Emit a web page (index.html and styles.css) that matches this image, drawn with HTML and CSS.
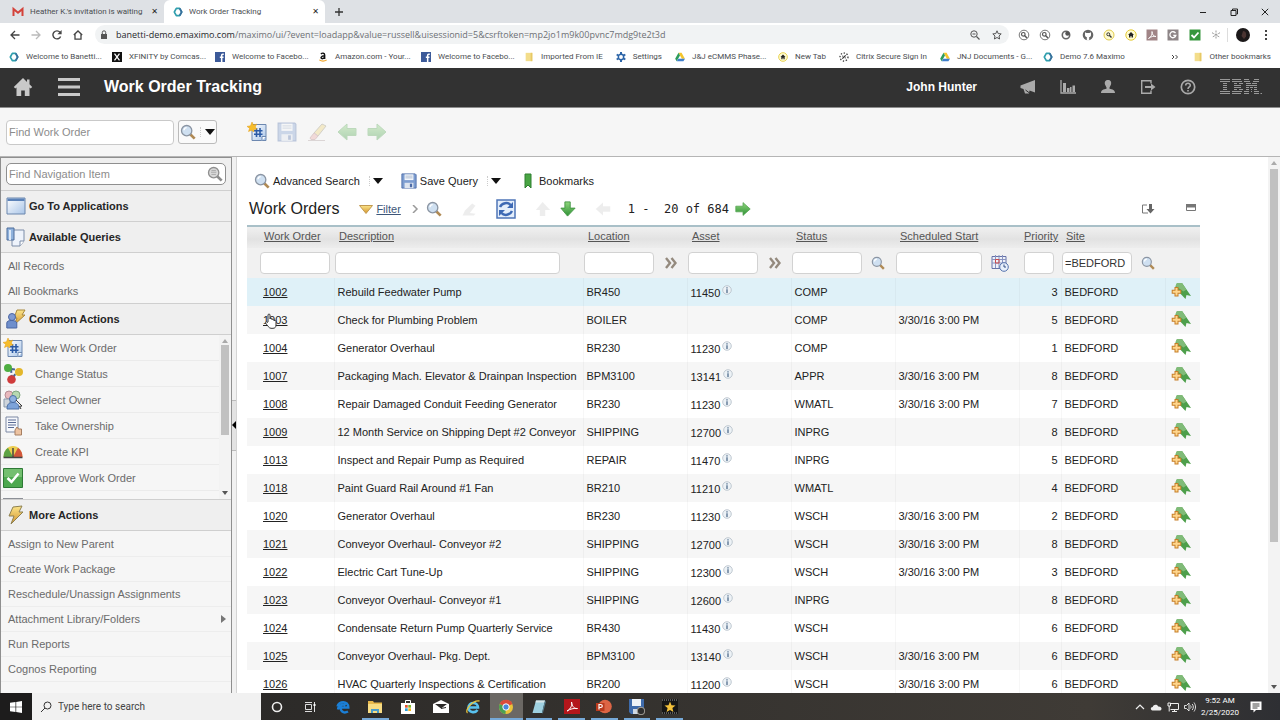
FILE: index.html
```html
<!DOCTYPE html>
<html lang="en">
<head>
<meta charset="utf-8">
<title>Work Order Tracking</title>
<link rel="stylesheet" href="styles.css">
</head>
<body>
<svg class="defs" aria-hidden="true">
  <defs>
    <linearGradient id="g-green" x1="0" y1="0" x2="0" y2="1"><stop offset="0" stop-color="#8fd67c"/><stop offset="1" stop-color="#2f9136"/></linearGradient>
    <linearGradient id="g-gold" x1="0" y1="0" x2="0" y2="1"><stop offset="0" stop-color="#fbe58a"/><stop offset="1" stop-color="#d3932c"/></linearGradient>
    <linearGradient id="g-blue" x1="0" y1="0" x2="1" y2="1"><stop offset="0" stop-color="#ffffff"/><stop offset="1" stop-color="#a9c5e8"/></linearGradient>
  </defs>
  <symbol id="i-ring" viewBox="0 0 12 12"><path d="M4 1.600h4L10.400 6 8 10.400H4L1.600 6z" fill="none" stroke="#2f9fae" stroke-width="2" stroke-linejoin="round"/><path d="M8 1.600 10.400 6 8 10.400" fill="none" stroke="#3a6f9c" stroke-width="2" stroke-linejoin="round"/></symbol>
  <symbol id="i-fb" viewBox="0 0 12 12"><path d="M0 0h12v12H0z" fill="#3c5a99"/><path d="M10.500 2.600H9.300c-1 0-1.300.5-1.300 1.400V12M5.800 6.400h4.400" fill="none" stroke="#fff" stroke-width="1.800"/></symbol>
  <symbol id="i-drive" viewBox="0 0 12 12"><path d="M4.200 1h3.700l4 7H8.200z" fill="#f5c52c"/><path d="M4.200 1 6 4.300 2 11 .2 8z" fill="#2e9c5b"/><path d="M4 8h8l-1.900 3H2z" fill="#3f7ecb"/></symbol>
  <symbol id="i-folder" viewBox="0 0 12 12"><path d="M2 1h8v10H2z" fill="#f3dd8b"/><path d="M8 1h2v10H8z" fill="#e7c965"/></symbol>
  <symbol id="i-home-badge" viewBox="0 0 12 12"><circle cx="6" cy="6" r="5.200" fill="#fffbd0" stroke="#e4ca36"/><path d="M6 3 3 6h1v2.600h1.500V7h1v1.600H8V6h1z" fill="#222"/></symbol>
  <symbol id="i-lens" viewBox="0 0 18 18"><path d="m11.500 11.500 5 5" stroke="#b08a54" stroke-width="3"/><circle cx="7.500" cy="7.500" r="5.800" fill="#cfe0f1" stroke="#8b95a3" stroke-width="1.500"/><path d="M4.500 7a3.200 3.200 0 0 1 3-3" fill="none" stroke="#fff" stroke-width="1.500"/></symbol>
  <symbol id="i-lens-grey" viewBox="0 0 18 18"><path d="m11.500 11.500 5 5" stroke="#8d8d8d" stroke-width="3"/><circle cx="7.500" cy="7.500" r="5.800" fill="#d9d9d9" stroke="#8f8f8f" stroke-width="1.500"/><path d="M4.500 7h6M5 9.500h5M5 5h5" stroke="#a5a5a5"/></symbol>
  <symbol id="i-new" viewBox="0 0 20 20"><path d="M5 2.500h14v16h-3l-1.500 0H5z" fill="url(#g-blue)" stroke="#6d88b0"/><path d="M15 18.500v-4h4" fill="#fff" stroke="#6d88b0"/><path d="M9.500 6v9M13 6v9M7 8.800h8.500M7 12.200h8.500" stroke="#2b5aa6" stroke-width="1.600"/><path d="m5 0 1.400 3 3.300-.8L8.200 5 10 7 7.100 7.400 6.500 10 4.700 8.200 1.500 9.500 2.600 6.300 0 4.400l3.500-.6z" fill="#f6bd2c" stroke="#e39d17" stroke-width=".5"/></symbol>
  <symbol id="i-save" viewBox="0 0 18 18"><path d="M1 1h15l1 1v15H1z" fill="#7d9dd0" stroke="#4d6ca8"/><path d="M4 1.500h10V8H4z" fill="#f4f7fb"/><path d="M5 3.500h8M5 5.500h8" stroke="#a9b7cc"/><path d="M4 11h10v6H4z" fill="#dde4ef"/><path d="M10 12h2.500v4H10z" fill="#4d6ca8"/></symbol>
  <symbol id="i-pencil" viewBox="0 0 20 20"><path d="M7 11 15 2l4 2-8 10z" fill="#f0d372" stroke="#8f8a72"/><path d="m3 16 4-5 4 3-3 3.500H4z" fill="#e9a6a2" stroke="#ad8080"/><path d="M1 18.500h17" stroke="#a99"/></symbol>
  <symbol id="i-right" viewBox="0 0 20 18"><path d="M1 5.500h9V1l9 8-9 8v-4.500H1z" fill="url(#g-green)" stroke="#55a553"/></symbol>
  <symbol id="i-left" viewBox="0 0 20 18"><path d="M19 5.500h-9V1L1 9l9 8v-4.500h9z" fill="url(#g-green)" stroke="#55a553"/></symbol>
  <symbol id="i-down" viewBox="0 0 18 18"><path d="M5.500 1h6v7H17l-8.500 9L1 8h4.500z" fill="url(#g-green)" stroke="#3f9440"/></symbol>
  <symbol id="i-up" viewBox="0 0 18 18"><path d="M5.500 17h6v-7H17L8.500 1 1 10h4.500z" fill="#aaa"/></symbol>
  <symbol id="i-caret" viewBox="0 0 10 6"><path d="M0 0h10L5 6z" fill="#111"/></symbol>
  <symbol id="i-bolt" viewBox="0 0 18 20"><path d="M6 2 15 1l-3 6h4L4 19l3-8H2z" fill="url(#g-gold)" stroke="#8d8051" stroke-linejoin="round"/></symbol>
  <symbol id="i-info" viewBox="0 0 10 10"><circle cx="5" cy="5" r="4.300" fill="#edf2f6" stroke="#b3bcc6" stroke-width=".8"/><path d="M5 4.300V8M5 2.200v1.200" stroke="#5c7794" stroke-width="1.400"/></symbol>
  <symbol id="i-more" viewBox="0 0 12 12"><path d="m1 1 4 5-4 5M6.500 1l4 5-4 5" fill="none" stroke="#948a7e" stroke-width="2.400"/></symbol>
  <symbol id="i-addmark" viewBox="0 0 20 18"><path d="M6 1h5l9 13-4.500-1-1 4L4 6z" fill="#4e9f4b"/><path d="M6 1h5l4.500 6.500-3 2L4.500 4z" fill="#80bb78"/><path d="M5.500 5v9.600M.7 9.800h9.600" stroke="#c67e27" stroke-width="4"/><path d="M5.500 6v7.600M1.700 9.800h7.600" stroke="#ffd68d" stroke-width="2"/></symbol>
  <symbol id="i-circlelens" viewBox="0 0 12 12"><circle cx="6" cy="6" r="4.800" fill="none" stroke="#777"/><circle cx="5.300" cy="5.300" r="1.800" fill="none" stroke="#555" stroke-width="1.200"/><path d="m6.500 6.500 2.500 2.500" stroke="#555" stroke-width="1.500"/></symbol>
</svg>

<div class="tabstrip">
  <div class="tab tab-idle">
    <svg class="ic12" viewBox="0 0 12 12"><path d="M1.500 10V3L6 6.800 10.500 3v7" fill="none" stroke="#d3423a" stroke-width="2"/></svg>
    <span class="tab-title">Heather K.'s invitation is waiting</span>
    <button class="tab-close" aria-label="Close tab">✕</button>
  </div>
  <div class="tab tab-active">
    <svg class="ic10"><use href="#i-ring"/></svg>
    <span class="tab-title">Work Order Tracking</span>
    <button class="tab-close" aria-label="Close tab">✕</button>
  </div>
  <button class="newtab" aria-label="New tab"><svg class="ic8" viewBox="0 0 8 8"><path d="M4 0v8M0 4h8" stroke="#333" stroke-width="1.300"/></svg></button>
  <div class="window-buttons">
    <button aria-label="Minimize"><svg class="ic8" viewBox="0 0 8 8"><path d="M1 4.500h6" stroke="#222"/></svg></button>
    <button aria-label="Restore"><svg class="ic8" viewBox="0 0 8 8"><path d="M1 2.500h5v5H1zM2.500 2V1h5v5h-1" fill="none" stroke="#222"/></svg></button>
    <button aria-label="Close"><svg class="ic8" viewBox="0 0 8 8"><path d="m.8.8 6.400 6.400M7.200.8.8 7.200" stroke="#222"/></svg></button>
  </div>
</div>

<div class="addressbar">
  <div class="nav-buttons">
    <button aria-label="Back"><svg class="ic10" viewBox="0 0 10 10"><path d="M9.500 5H1.200M5 1 1 5l4 4" fill="none" stroke="#444" stroke-width="1.300"/></svg></button>
    <button aria-label="Forward"><svg class="ic10" viewBox="0 0 10 10"><path d="M.5 5h8.300M5 1l4 4-4 4" fill="none" stroke="#bbb" stroke-width="1.300"/></svg></button>
    <button aria-label="Reload"><svg class="ic10" viewBox="0 0 10 10"><path d="M8.600 6.500A4 4 0 1 1 8 2.300" fill="none" stroke="#444" stroke-width="1.400"/><path d="M9.600 0v4.200H5.400z" fill="#444"/></svg></button>
    <button aria-label="Home"><svg class="ic10" viewBox="0 0 10 10"><path d="M.8 5 5 1l4.200 4M2 4.200v5h6v-5" fill="none" stroke="#444" stroke-width="1.300"/></svg></button>
  </div>
  <div class="omnibox">
    <svg class="lock" viewBox="0 0 8 10"><path d="M1 4h6v5H1z" fill="#555"/><path d="M2.300 4V2.500a1.700 1.700 0 0 1 3.400 0V4" fill="none" stroke="#555"/></svg>
    <span class="url"><b>banetti-demo.emaximo.com</b>/maximo/ui/?event=loadapp&amp;value=russell&amp;uisessionid=5&amp;csrftoken=mp2jo1m9k00pvnc7mdg9te2t3d</span>
    <button aria-label="Zoom"><svg class="ic10" viewBox="0 0 10 10"><circle cx="4" cy="4" r="3.200" fill="none" stroke="#555"/><path d="M2.500 4h3M6.500 6.500l3 3" stroke="#555" stroke-width="1.200"/></svg></button>
    <button aria-label="Bookmark this page"><svg class="ic10" viewBox="0 0 10 10"><path d="m5 .8 1.200 2.800 3 .3L7 6l.6 3L5 7.500 2.400 9 3 6 .8 3.900l3-.3z" fill="none" stroke="#555"/></svg></button>
  </div>
  <div class="extensions">
    <svg class="ic12"><use href="#i-circlelens"/></svg>
    <svg class="ic12"><use href="#i-circlelens"/></svg>
    <svg class="ic12" viewBox="0 0 12 12"><circle cx="6" cy="6" r="3.700" fill="#fff" stroke="#666" stroke-width="1.600"/><circle cx="7.500" cy="4.500" r="2.200" fill="#555"/></svg>
    <svg class="ic12" viewBox="0 0 12 12"><circle cx="6" cy="6" r="5.300" fill="#666"/><path d="M3 3.200 4.500 4h3L9 3.200V6c0 1.500-1 2-1.800 2v3.500H4.800V8C4 8 3 7.500 3 6z" fill="#fff"/></svg>
    <svg class="ic12" viewBox="0 0 12 12"><circle cx="6" cy="6" r="5" fill="#fffbd0" stroke="#dfca4b"/><circle cx="5.300" cy="5.300" r="1.500" fill="none" stroke="#333"/><path d="m6.300 6.300 2.200 2.200" stroke="#333" stroke-width="1.400"/></svg>
    <svg class="ic12"><use href="#i-home-badge"/></svg>
    <svg class="ic12" viewBox="0 0 12 12"><path d="M.5.500h11v11H.5z" fill="#a08486"/><path d="M2.500 9.500c3-1.500 4-5 3.500-7C6 6 8 7.500 10 7.500 7.500 7 5 7.500 2.500 9.500" fill="none" stroke="#fff" stroke-width=".9"/></svg>
    <svg class="ic12" viewBox="0 0 12 12"><path d="M.5.500h11v11H.5z" fill="#8d8587"/><path d="M8.500 4.200A3 3 0 1 0 8.800 6.500H6.300" fill="none" stroke="#fff" stroke-width="1.300"/></svg>
    <svg class="ic12" viewBox="0 0 12 12"><path d="M.5.500h11v11H.5z" fill="#37963d"/><path d="m2.500 6 2.500 2.500L9.500 3.500" fill="none" stroke="#fff" stroke-width="1.800"/></svg>
    <svg class="ic12" viewBox="0 0 12 12"><path d="M6 1.500v9M2 3.700l8 4.600M10 3.700 2 8.300" stroke="#999" stroke-dasharray="2 1"/></svg>
  </div>
  <div class="profile">
    <svg class="avatar" viewBox="0 0 14 14"><circle cx="7" cy="7" r="7" fill="#1b1819"/><path d="M7 3c3 0 3.500 3 3 5.500L8 11 5.500 8z" fill="#4a3432"/></svg>
    <button aria-label="Browser menu"><svg class="kebab" viewBox="0 0 4 10"><path d="M1 0h2v2H1zM1 4h2v2H1zM1 8h2v2H1z" fill="#444"/></svg></button>
  </div>
</div>

<nav class="bookmarks" aria-label="Browser bookmarks">
  <a class="long" href="#"><svg class="ic10"><use href="#i-ring"/></svg>Welcome to Banetti...</a>
  <a class="long" href="#"><svg class="ic10" viewBox="0 0 12 12"><path d="M0 0h12v12H0z" fill="#111"/><path d="m3 2 6 8M9 2 3 10" stroke="#fff" stroke-width="1.500"/></svg>XFINITY by Comcas...</a>
  <a class="long" href="#"><svg class="ic10"><use href="#i-fb"/></svg>Welcome to Facebo...</a>
  <a class="long" href="#"><svg class="ic10" viewBox="0 0 12 12"><path d="M3.500 2.500C5 .8 8 1 8 3.500v5M8 4.500C3 4.500 2.800 8 5 8c1.500 0 3-1 3-2.500" fill="none" stroke="#111" stroke-width="1.700"/><path d="M1.500 9.500c3 2 6 2 9 0" fill="none" stroke="#f0a52b" stroke-width="1.300"/></svg>Amazon.com - Your...</a>
  <a class="long" href="#"><svg class="ic10"><use href="#i-fb"/></svg>Welcome to Facebo...</a>
  <a href="#"><svg class="ic10"><use href="#i-folder"/></svg>Imported From IE</a>
  <a href="#"><svg class="ic10" viewBox="0 0 12 12"><path d="M6 0v12M.8 3l10.400 6M11.200 3 .8 9" stroke="#2d65a8" stroke-width="2.400"/><circle cx="6" cy="6" r="3.200" fill="#fff" stroke="#2d65a8" stroke-width="1.800"/></svg>Settings</a>
  <a class="long" href="#"><svg class="ic10"><use href="#i-drive"/></svg>J&amp;J eCMMS Phase...</a>
  <a href="#"><svg class="ic10"><use href="#i-home-badge"/></svg>New Tab</a>
  <a href="#"><svg class="ic10" viewBox="0 0 12 12"><circle cx="6" cy="6" r="4.800" fill="none" stroke="#333" stroke-width="1.500" stroke-dasharray="1.600 2"/><path d="m4 8 4-4M4 5h1M7 7h1" stroke="#333" stroke-width="1.500"/></svg>Citrix Secure Sign In</a>
  <a class="long" href="#"><svg class="ic10"><use href="#i-drive"/></svg>JNJ Documents - G...</a>
  <a href="#"><svg class="ic10"><use href="#i-ring"/></svg>Demo 7.6 Maximo</a>
  <div class="bookmarks-end">
    <button aria-label="More bookmarks"><svg class="ic8" viewBox="0 0 8 8"><path d="m1 2 2 2-2 2M4.500 2l2 2-2 2" fill="none" stroke="#444"/></svg></button>
    <a href="#"><svg class="ic10"><use href="#i-folder"/></svg>Other bookmarks</a>
  </div>
</nav>

<header class="appbar">
  <button aria-label="Start center"><svg class="ic20" viewBox="0 0 20 20"><path d="M10 1 .8 10l1.500 1.500L3.500 10.500V19h4.700v-5.500h3.600V19h4.700v-8.500l1.200 1 1.500-1.500-2.700-2.700V2.500h-2.500V5z" fill="#c9c9c9"/></svg></button>
  <button aria-label="Menu"><svg class="burger" viewBox="0 0 22 18"><path d="M0 1.500h22M0 9h22M0 16.500h22" stroke="#c9c9c9" stroke-width="3"/></svg></button>
  <h1>Work Order Tracking</h1>
  <span class="user">John Hunter</span>
  <div class="app-icons">
    <button aria-label="Bulletins"><svg class="ic16" viewBox="0 0 16 16"><path d="M.5 6.500 15 1v12.500L9.500 11.500 9 14.500H5L3.500 10 .5 9z" fill="#aaa"/><path d="m5.500 11 4 3" stroke="#333"/></svg></button>
    <button aria-label="Reports"><svg class="ic16" viewBox="0 0 16 16"><path d="M1 1v13h15" fill="none" stroke="#aaa" stroke-width="1.300"/><path d="M3 4h3v9H3zM7 9h2.500v4H7zM10 8h1.500v5H10zM12.500 6.500H15V13h-2.500z" fill="#aaa"/></svg></button>
    <button aria-label="Profile"><svg class="ic16" viewBox="0 0 16 16"><path d="M8 1c2.500 0 3.800 2 3 4.500L9.500 8.500v1.300c3 .7 5.500 1.200 5.500 4.200H1c0-3 2.500-3.500 5.500-4.200V8.500L5 5.500C4.200 3 5.500 1 8 1" fill="#aaa"/></svg></button>
    <button aria-label="Sign out"><svg class="ic16" viewBox="0 0 16 16"><path d="M11 4.500V1.700H1.700v12.600H11v-2.800" fill="none" stroke="#aaa" stroke-width="1.400"/><path d="M5 7h6V4.500L15.500 8 11 11.500V9H5z" fill="#aaa"/></svg></button>
    <button aria-label="Help"><svg class="ic16" viewBox="0 0 16 16"><circle cx="8" cy="8" r="6.700" fill="none" stroke="#aaa" stroke-width="1.700"/><path d="M5.700 6.500C5.700 3.500 10.400 3.700 10.300 6.300 10.300 8 8 7.800 8 10M8 11v1.500" fill="none" stroke="#aaa" stroke-width="1.600"/></svg></button>
  </div>
  <svg class="ibm" viewBox="0 0 42 16" role="img" aria-label="IBM"><path d="M0 .5h10M0 2.500h10M3 4.500h4M3 6.500h4M3 8.500h4M3 10.500h4M0 12.500h10M0 14.500h10M12 .5h9M12 2.500h10M14 4.500h3M19 4.500h4M14 6.500h7M14 8.500h7M19 10.500h4M14 10.500h3M12 12.500h10M12 14.500h9M24 .5h5M34 .5h5M24 2.500h6M33 2.500h6M26 4.500h5M32 4.500h5M26 6.500h11M26 8.500h3M30 8.500h3M34 8.500h3M26 10.500h3M31 10.500h1M34 10.500h3M24 12.500h5M31 12.500h1M34 12.500h5M24 14.500h5M34 14.500h5M40.500 14.500h1.500" stroke="#989898"/></svg>
</header>

<div class="toolbar">
  <input class="find" type="text" placeholder="Find Work Order" aria-label="Find Work Order">
  <button class="find-button" aria-label="Search options"><svg class="ic16"><use href="#i-lens"/></svg><i class="dots"></i><svg class="caret"><use href="#i-caret"/></svg></button>
  <div class="tools">
    <button aria-label="New work order"><svg class="ic20"><use href="#i-new"/></svg></button>
    <button class="off" aria-label="Save"><svg class="ic20"><use href="#i-save"/></svg></button>
    <button class="off" aria-label="Clear changes"><svg class="ic20"><use href="#i-pencil"/></svg></button>
    <button class="off" aria-label="Previous"><svg class="ic20"><use href="#i-left"/></svg></button>
    <button class="off" aria-label="Next"><svg class="ic20"><use href="#i-right"/></svg></button>
  </div>
</div>

<div class="workspace">
  <aside class="sidebar">
    <div class="nav-search">
      <input type="text" placeholder="Find Navigation Item" aria-label="Find Navigation Item">
      <svg class="ic16"><use href="#i-lens-grey"/></svg>
    </div>
    <h2><svg class="ic20" viewBox="0 0 20 20"><path d="M1 2h18v16H1z" fill="url(#g-blue)" stroke="#6a86ad"/><path d="M1.500 2.500h17V5h-17z" fill="#5b82b8"/></svg>Go To Applications</h2>
    <h2><svg class="ic20" viewBox="0 0 20 20"><path d="M6 3h12v11l-4 5H6z" fill="#eef3fb" stroke="#7d8da8"/><path d="M14 19v-5h4" fill="#fff" stroke="#7d8da8"/><path d="M1 1h7v12H1z" fill="#8fb2dd" stroke="#4c6c9b"/><path d="M4 3v10" stroke="#dce9f8" stroke-width="2"/></svg>Available Queries</h2>
    <ul class="links queries"><li><a href="#">All Records</a></li><li><a href="#">All Bookmarks</a></li></ul>
    <h2><svg class="ic20" viewBox="0 0 20 20"><path d="M11 1h8l-3 5h3L8 16l3-7H8z" fill="url(#g-gold)" stroke="#a9883c"/><circle cx="6" cy="8" r="3.500" fill="#7e9ad2" stroke="#4b66a3"/><path d="M.8 19v-5c0-2 2-2.500 5-2.500s5 1 5 2.500v5z" fill="#6f8fcc" stroke="#4b66a3"/></svg>Common Actions</h2>
    <div class="actions-box">
      <ul class="actions">
        <li><a href="#"><svg class="ic20"><use href="#i-new"/></svg>New Work Order</a></li>
        <li><a href="#"><svg class="ic20" viewBox="0 0 20 20"><path d="m8 5 7 1-6 9z" fill="none" stroke="#49658f" stroke-width="2" stroke-dasharray="4 2"/><circle cx="5" cy="4" r="4" fill="#4eae41"/><circle cx="16" cy="8" r="4" fill="#e3b72b"/><circle cx="8.500" cy="15.500" r="4.300" fill="#d03c3c"/></svg>Change Status</a></li>
        <li><a href="#"><svg class="ic20" viewBox="0 0 20 20"><circle cx="6" cy="5" r="4" fill="#e9b9bd" stroke="#b48c94"/><circle cx="13" cy="5" r="4" fill="#b8d9b1" stroke="#82a882"/><path d="M1 17V9h6v8z" fill="#cfd5dc" stroke="#8b9bab"/><circle cx="10" cy="9" r="3.500" fill="#8fb1df" stroke="#4a6ea6"/><path d="M4 19c0-5 2-6.500 6-6.500s6 1.500 6 6.500z" fill="#7da3d9" stroke="#4a6ea6"/><path d="m13 10 6 6-2.500.3L18 19" fill="none" stroke="#333"/></svg>Select Owner</a></li>
        <li><a href="#"><svg class="ic20" viewBox="0 0 20 20"><path d="M3 1h12v15H3z" fill="#f6f8fc" stroke="#7c88a3"/><path d="M5 4h8M5 6.500h8M5 9h8M5 11.500h6" stroke="#5a6b95"/><path d="M12 19v-5l2-3 1.500 2h3V19z" fill="#edc3a2" stroke="#a67f62"/></svg>Take Ownership</a></li>
        <li><a href="#"><svg class="ic20" viewBox="0 0 20 20"><path d="M.5 15a9.500 11 0 0 1 19 0z" fill="#eccd4f"/><path d="M.5 15A9.500 11 0 0 1 5 5.800L10 15z" fill="#5da344"/><path d="M19.500 15A9.500 11 0 0 0 15 5.800L10 15z" fill="#d2553a"/><path d="M10 6v9.500M.5 15.500h19" stroke="#444" stroke-width="1.500"/></svg>Create KPI</a></li>
        <li><a href="#"><svg class="ic20" viewBox="0 0 20 20"><path d="M.5.500h19v19H.5z" fill="#4da84f" stroke="#2e7a36"/><path d="M1 1h18v8H1z" fill="#74bf70"/><path d="m4.500 10 4 4 7-8.500" fill="none" stroke="#fff" stroke-width="2.500"/></svg>Approve Work Order</a></li>
        <li><a href="#" aria-label="Initiate Work Order"><svg class="ic20" viewBox="0 0 20 20"><path d="M0 4h20v14H0z" fill="#8d9097"/></svg></a></li>
      </ul>
      <div class="scroll-rail"><i class="arrow-up"></i><i class="thumb"></i><i class="arrow-down"></i></div>
    </div>
    <h2><svg class="ic20"><use href="#i-bolt"/></svg>More Actions</h2>
    <ul class="links more">
      <li><a href="#">Assign to New Parent</a></li>
      <li><a href="#">Create Work Package</a></li>
      <li><a href="#">Reschedule/Unassign Assignments</a></li>
      <li><a href="#">Attachment Library/Folders<i class="submenu"></i></a></li>
      <li><a href="#">Run Reports</a></li>
      <li><a href="#">Cognos Reporting</a></li>
    </ul>
  </aside>
  <div class="splitter"><button aria-label="Collapse navigation"></button></div>

  <main class="content">
    <div class="query-bar">
      <button><svg class="ic16"><use href="#i-lens"/></svg>Advanced Search<i class="dots"></i><svg class="caret"><use href="#i-caret"/></svg></button>
      <button><svg class="ic16"><use href="#i-save"/></svg>Save Query<i class="dots"></i><svg class="caret"><use href="#i-caret"/></svg></button>
      <button><svg class="ribbon" viewBox="0 0 8 16"><path d="M1 1h6v14l-3-3-3 3z" fill="#4aa544" stroke="#2f7e31"/></svg>Bookmarks</button>
    </div>
    <div class="table-bar">
      <h2>Work Orders</h2>
      <button class="filter"><svg class="funnel" viewBox="0 0 14 9"><path d="M.5.500h13L7 8.500z" fill="url(#g-gold)" stroke="#c29a50"/></svg><u>Filter</u></button>
      <svg class="ic8" viewBox="0 0 8 8"><path d="m2 0 4 4-4 4" fill="none" stroke="#999" stroke-width="1.500"/></svg>
      <div class="table-tools">
        <button aria-label="Search table"><svg class="ic16"><use href="#i-lens"/></svg></button>
        <button class="faint" aria-label="Clear filter"><svg class="ic16" viewBox="0 0 20 20"><path d="M5 12 14 3l4 3-7 9 7 1-2 2H2z" fill="#aaa"/></svg></button>
        <button aria-label="Refresh"><svg class="ic20" viewBox="0 0 20 20"><path d="M1 1h18v18H1z" fill="#e4eefb" stroke="#4f76b8" stroke-width="1.500"/><path d="M4 8c2-4.500 8-5 10.500-2M16 12c-2 4.500-8 5-10.500 2" fill="none" stroke="#3d69b4" stroke-width="2.500"/><path d="M17 3v6h-6zM3 17v-6h6z" fill="#3d69b4"/></svg></button>
        <div class="row-steps">
          <button class="faint" aria-label="Previous row"><svg class="ic16"><use href="#i-up"/></svg></button>
          <button aria-label="Next row"><svg class="ic16"><use href="#i-down"/></svg></button>
        </div>
        <button class="faint" aria-label="Previous page"><svg class="ic16" viewBox="0 0 20 18"><path d="M19 5.500h-9V1L1 9l9 8v-4.500h9z" fill="#aaa"/></svg></button>
      </div>
      <span class="range">1 -  20 of 684</span>
      <button aria-label="Next page"><svg class="ic16"><use href="#i-right"/></svg></button>
      <div class="table-bar-end">
        <button aria-label="Download"><svg class="ic14" viewBox="0 0 14 14"><path d="M6 3H1.500v8H7" fill="none" stroke="#777"/><path d="M8 2h3v5h2.500l-4 4.500-4-4.500H8z" fill="#666"/></svg></button>
        <button aria-label="Collapse table"><svg class="ic12" viewBox="0 0 12 12"><path d="M1.500 1.500h9v6h-9z" fill="#fff" stroke="#777"/><path d="M1 1h10v3.500H1z" fill="#777"/></svg></button>
      </div>
    </div>
    <table>
      <colgroup><col class="c-wo"><col><col class="c-mid"><col class="c-mid"><col class="c-mid"><col class="c-date"><col class="c-pri"><col class="c-mid"><col class="c-mark"></colgroup>
      <thead>
        <tr class="names">
          <th scope="col"><a href="#">Work Order</a></th><th scope="col"><a href="#">Description</a></th><th scope="col"><a href="#">Location</a></th><th scope="col"><a href="#">Asset</a></th><th scope="col"><a href="#">Status</a></th><th scope="col"><a href="#">Scheduled Start</a></th><th scope="col" class="num"><a href="#">Priority</a></th><th scope="col"><a href="#">Site</a></th><th></th>
        </tr>
        <tr class="filters">
          <td><div class="field"><input type="text" aria-label="Filter Work Order"></div></td>
          <td><div class="field"><input class="wide" type="text" aria-label="Filter Description"></div></td>
          <td><div class="field"><input type="text" aria-label="Filter Location"><button aria-label="Location lookup"><svg class="ic12"><use href="#i-more"/></svg></button></div></td>
          <td><div class="field"><input type="text" aria-label="Filter Asset"><button aria-label="Asset lookup"><svg class="ic12"><use href="#i-more"/></svg></button></div></td>
          <td><div class="field"><input type="text" aria-label="Filter Status"><button aria-label="Status lookup"><svg class="ic14"><use href="#i-lens"/></svg></button></div></td>
          <td><div class="field"><input class="date" type="text" aria-label="Filter Scheduled Start"><button aria-label="Pick date"><svg class="ic18" viewBox="0 0 18 18"><path d="M1 2.500h14v12H1z" fill="#eef1fa" stroke="#6672a8"/><path d="M1 5.500h14M4.500 1v13M8 1v13M11.500 1v13M1 9h14" stroke="#8a94bf"/><path d="M4.500 5.500H8V9H4.500z" fill="none" stroke="#cf4a4a"/><circle cx="13" cy="13" r="4.300" fill="#e8f0fb" stroke="#5573ad"/><path d="M13 10.500V13h2" fill="none" stroke="#334f86"/></svg></button></div></td>
          <td><div class="field end"><input class="tiny" type="text" aria-label="Filter Priority"></div></td>
          <td><div class="field"><input type="text" value="=BEDFORD" aria-label="Filter Site"><button aria-label="Site lookup"><svg class="ic14"><use href="#i-lens"/></svg></button></div></td>
          <td></td>
        </tr>
      </thead>
      <tbody>
        <tr class="hover"><td><a href="#">1002</a></td><td>Rebuild Feedwater Pump</td><td>BR450</td><td class="asset">11450<svg><use href="#i-info"/></svg></td><td>COMP</td><td></td><td class="num">3</td><td>BEDFORD</td><td><button aria-label="Bookmark 1002"><svg class="mark"><use href="#i-addmark"/></svg></button></td></tr>
        <tr><td><a href="#">1003</a><svg class="pointer" viewBox="0 0 14 16" aria-hidden="true"><path d="M4 9V2c0-1.300 2-1.300 2 0v4c0-1 2-1 2 0v.8c0-1 2-1 2 .2V8c.5-1 2-.6 2 .5V12c0 2-1 3.300-3 3.300H7C5 15.300 3.500 12.500 1.500 10c-.5-1.200 1-1.800 2.500-.2" fill="#fff" stroke="#333"/></svg></td><td>Check for Plumbing Problem</td><td>BOILER</td><td class="asset"></td><td>COMP</td><td>3/30/16 3:00 PM</td><td class="num">5</td><td>BEDFORD</td><td><button aria-label="Bookmark 1003"><svg class="mark"><use href="#i-addmark"/></svg></button></td></tr>
        <tr><td><a href="#">1004</a></td><td>Generator Overhaul</td><td>BR230</td><td class="asset">11230<svg><use href="#i-info"/></svg></td><td>COMP</td><td></td><td class="num">1</td><td>BEDFORD</td><td><button aria-label="Bookmark 1004"><svg class="mark"><use href="#i-addmark"/></svg></button></td></tr>
        <tr><td><a href="#">1007</a></td><td>Packaging Mach. Elevator &amp; Drainpan Inspection</td><td>BPM3100</td><td class="asset">13141<svg><use href="#i-info"/></svg></td><td>APPR</td><td>3/30/16 3:00 PM</td><td class="num">8</td><td>BEDFORD</td><td><button aria-label="Bookmark 1007"><svg class="mark"><use href="#i-addmark"/></svg></button></td></tr>
        <tr><td><a href="#">1008</a></td><td>Repair Damaged Conduit Feeding Generator</td><td>BR230</td><td class="asset">11230<svg><use href="#i-info"/></svg></td><td>WMATL</td><td>3/30/16 3:00 PM</td><td class="num">7</td><td>BEDFORD</td><td><button aria-label="Bookmark 1008"><svg class="mark"><use href="#i-addmark"/></svg></button></td></tr>
        <tr><td><a href="#">1009</a></td><td>12 Month Service on Shipping Dept #2 Conveyor</td><td>SHIPPING</td><td class="asset">12700<svg><use href="#i-info"/></svg></td><td>INPRG</td><td></td><td class="num">8</td><td>BEDFORD</td><td><button aria-label="Bookmark 1009"><svg class="mark"><use href="#i-addmark"/></svg></button></td></tr>
        <tr><td><a href="#">1013</a></td><td>Inspect and Repair Pump as Required</td><td>REPAIR</td><td class="asset">11470<svg><use href="#i-info"/></svg></td><td>INPRG</td><td></td><td class="num">5</td><td>BEDFORD</td><td><button aria-label="Bookmark 1013"><svg class="mark"><use href="#i-addmark"/></svg></button></td></tr>
        <tr><td><a href="#">1018</a></td><td>Paint Guard Rail Around #1 Fan</td><td>BR210</td><td class="asset">11210<svg><use href="#i-info"/></svg></td><td>WMATL</td><td></td><td class="num">4</td><td>BEDFORD</td><td><button aria-label="Bookmark 1018"><svg class="mark"><use href="#i-addmark"/></svg></button></td></tr>
        <tr><td><a href="#">1020</a></td><td>Generator Overhaul</td><td>BR230</td><td class="asset">11230<svg><use href="#i-info"/></svg></td><td>WSCH</td><td>3/30/16 3:00 PM</td><td class="num">2</td><td>BEDFORD</td><td><button aria-label="Bookmark 1020"><svg class="mark"><use href="#i-addmark"/></svg></button></td></tr>
        <tr><td><a href="#">1021</a></td><td>Conveyor Overhaul- Conveyor #2</td><td>SHIPPING</td><td class="asset">12700<svg><use href="#i-info"/></svg></td><td>WSCH</td><td>3/30/16 3:00 PM</td><td class="num">8</td><td>BEDFORD</td><td><button aria-label="Bookmark 1021"><svg class="mark"><use href="#i-addmark"/></svg></button></td></tr>
        <tr><td><a href="#">1022</a></td><td>Electric Cart Tune-Up</td><td>SHIPPING</td><td class="asset">12300<svg><use href="#i-info"/></svg></td><td>WSCH</td><td>3/30/16 3:00 PM</td><td class="num">3</td><td>BEDFORD</td><td><button aria-label="Bookmark 1022"><svg class="mark"><use href="#i-addmark"/></svg></button></td></tr>
        <tr><td><a href="#">1023</a></td><td>Conveyor Overhaul- Conveyor #1</td><td>SHIPPING</td><td class="asset">12600<svg><use href="#i-info"/></svg></td><td>INPRG</td><td></td><td class="num">8</td><td>BEDFORD</td><td><button aria-label="Bookmark 1023"><svg class="mark"><use href="#i-addmark"/></svg></button></td></tr>
        <tr><td><a href="#">1024</a></td><td>Condensate Return Pump Quarterly Service</td><td>BR430</td><td class="asset">11430<svg><use href="#i-info"/></svg></td><td>WSCH</td><td></td><td class="num">6</td><td>BEDFORD</td><td><button aria-label="Bookmark 1024"><svg class="mark"><use href="#i-addmark"/></svg></button></td></tr>
        <tr><td><a href="#">1025</a></td><td>Conveyor Overhaul- Pkg. Dept.</td><td>BPM3100</td><td class="asset">13140<svg><use href="#i-info"/></svg></td><td>WSCH</td><td>3/30/16 3:00 PM</td><td class="num">6</td><td>BEDFORD</td><td><button aria-label="Bookmark 1025"><svg class="mark"><use href="#i-addmark"/></svg></button></td></tr>
        <tr><td><a href="#">1026</a></td><td>HVAC Quarterly Inspections &amp; Certification</td><td>BR200</td><td class="asset">11200<svg><use href="#i-info"/></svg></td><td>WSCH</td><td>3/30/16 3:00 PM</td><td class="num">6</td><td>BEDFORD</td><td><button aria-label="Bookmark 1026"><svg class="mark"><use href="#i-addmark"/></svg></button></td></tr>
      </tbody>
    </table>
  </main>
  <div class="scroll-rail page-rail"><i class="arrow-up"></i><i class="thumb"></i><i class="arrow-down"></i></div>
</div>

<footer class="taskbar">
  <button class="start" aria-label="Start"><svg class="ic12" viewBox="0 0 12 12"><path d="M0 1.700 5.500 1v4.700H0zM6.200.9 12 0v5.700H6.200zM0 6.300h5.500V11L0 10.300zM6.200 6.300H12V12l-5.800-.9z" fill="#fff"/></svg></button>
  <label class="task-search"><svg class="ic12" viewBox="0 0 12 12"><circle cx="7.500" cy="4.500" r="3.500" fill="none" stroke="#333"/><path d="M5 7 1 11" stroke="#333"/></svg><input type="text" placeholder="Type here to search" aria-label="Type here to search"></label>
  <div class="task-icons">
    <button aria-label="Cortana"><svg class="ic14" viewBox="0 0 14 14"><circle cx="7" cy="7" r="4.500" fill="none" stroke="#eee" stroke-width="1.600"/></svg></button>
    <button aria-label="Task view"><svg class="ic14" viewBox="0 0 14 14"><path d="M2.500 4.500h6v5h-6zM2 2.500h7M2 11.500h7M11.500 2v10" fill="none" stroke="#ddd"/><path d="M10.500 4h2v2h-2z" fill="#fff"/></svg></button>
    <button aria-label="Edge"><svg class="ic14" viewBox="0 0 14 14"><path d="M1.500 6.500C2.500 1 12.300 0 12.300 7.500H4.500C5 13 9 13.200 12 11.500M2 9.500C2.500 5 7 3.500 9.500 5.500" fill="none" stroke="#1b7fd6" stroke-width="2.400"/></svg></button>
    <button class="open" aria-label="File Explorer"><svg class="ic16" viewBox="0 0 16 16"><path d="M1 2h5l1 1.500h8V14H1z" fill="#e8b84b"/><path d="M1 5h14v9H1z" fill="#f8dc83"/><path d="M4 14v-4h8v4h-2v-2H6v2z" fill="#4c9dc9"/></svg></button>
    <button aria-label="Store"><svg class="ic16" viewBox="0 0 16 16"><path d="M5.500 4V1.500h5V4" fill="none" stroke="#fff"/><path d="M1 4h14v11H1z" fill="#fff"/><path d="M5 6h2.700v2.700H5z" fill="#e4532d"/><path d="M8.300 6H11v2.700H8.300z" fill="#7ab42a"/><path d="M5 9.300h2.700V12H5z" fill="#2b9fd9"/><path d="M8.300 9.300H11V12H8.300z" fill="#f2b51d"/></svg></button>
    <button aria-label="Mail"><svg class="ic16" viewBox="0 0 16 16"><path d="M0 5 8 1l8 4v9H0z" fill="#fff"/><path d="M2 5h12L8 9.500z" fill="#2c2a29"/><path d="m8 9.500 5-1" stroke="#2c2a29"/></svg></button>
    <button aria-label="Internet Explorer"><svg class="ic16" viewBox="0 0 16 16"><path d="M3.500 8.500h9.500C13 2.500 3.500 2.500 3.500 8.500c0 5 6.500 6 9 2.500" fill="none" stroke="#59c2ee" stroke-width="2.600"/><path d="M2.500 14C-1 12 8 .5 14.500 2" fill="none" stroke="#e8c43d" stroke-width="1.300"/></svg></button>
    <button class="open current" aria-label="Chrome"><svg class="ic16" viewBox="0 0 16 16"><circle cx="8" cy="8" r="7" fill="#eac43b"/><path d="M8 8 1.700 5A7 7 0 0 1 14.500 5z" fill="#db4b3c"/><path d="M8 8 1.700 5A7 7 0 0 0 7.500 15z" fill="#4aa154"/><circle cx="8" cy="8" r="3.200" fill="#4b86dc" stroke="#fff"/></svg></button>
    <button class="open" aria-label="Notepad"><svg class="ic16" viewBox="0 0 16 16"><path d="M5 1.500h9L11 14H1.500z" fill="#9ed0e0"/><path d="M5 1.500h9l-.5 2h-9z" fill="#d7e5e8"/><path d="m11 14 3-12.500.8 1.500-3 11.500z" fill="#587f91"/></svg></button>
    <button class="open" aria-label="Acrobat"><svg class="ic16" viewBox="0 0 16 16"><path d="M0 0h16v15H0z" fill="#b4161b"/><path d="M3 12c4-2 5.500-6.500 4.500-9C8 8 11 10 13.500 9.500 10 9 6 10 3 12" fill="none" stroke="#fff"/></svg></button>
    <button class="open" aria-label="PowerPoint"><svg class="ic16" viewBox="0 0 16 16"><circle cx="9" cy="7.500" r="6.800" fill="#dd6545"/><path d="M0 4h8.500v8H0z" fill="#b93a1d"/><path d="M3 10.500v-5h1.500c2.400 0 2.400 3 0 3H3" fill="none" stroke="#fff" stroke-width="1.200"/></svg></button>
    <button class="open" aria-label="Disk capture"><svg class="ic16" viewBox="0 0 16 16"><path d="M0 0h15v15H2l-2-2z" fill="#3e6bab"/><path d="M3 0h9v7H3z" fill="#eef3f7"/><path d="M4 10h6v5H4z" fill="#cfd8e2"/><circle cx="12" cy="12" r="3.800" fill="#2e2e2e" stroke="#a6a39b"/></svg></button>
    <button class="open" aria-label="Movie maker"><svg class="ic16" viewBox="0 0 16 16"><path d="M0 0h16v15H0z" fill="#161616"/><path d="M0 1h16M0 14h16" stroke="#999" stroke-dasharray="1 1"/><path d="m8 2.500 1.500 3.700 4 .3-3.100 2.600 1 3.900L8 11l-3.400 2 1-3.900-3.100-2.600 4-.3z" fill="#f3c13b"/></svg></button>
  </div>
  <div class="tray">
    <svg class="ic10" viewBox="0 0 10 10"><path d="m1 7 4-4 4 4" fill="none" stroke="#eee" stroke-width="1.200"/></svg>
    <svg class="ic12" viewBox="0 0 12 12"><path d="M2.500 9.500C0 9 .5 6 2.700 6 3.500 3 7.500 3 8.200 5.500c4-.5 4.300 4 1.300 4z" fill="#eee"/></svg>
    <svg class="ic12" viewBox="0 0 12 12"><path d="M3.500 2.500h8v6h-8M5 10.500h5M7.500 8.500v2M1 2h2.500v3H1zM2.200 5v5.500" fill="none" stroke="#eee"/></svg>
    <svg class="ic12" viewBox="0 0 12 12"><path d="M.5 4.500h2L5 2v8L2.500 7.500h-2zM6.500 4.500c.8 1 .8 2 0 3M8.200 3c1.500 2 1.500 4 0 6M10 1.500c2 3 2 6 0 9" fill="none" stroke="#eee" stroke-width=".9"/></svg>
    <time class="clock"><span>9:52 AM</span><span>2/25/2020</span></time>
    <button aria-label="Notifications"><svg class="ic12" viewBox="0 0 12 12"><path d="M.5.500h11v8.500H6L3.500 11.500V9h-3z" fill="#fff"/><path d="M2.500 3h7M2.500 5h7M2.500 7h5" stroke="#444"/></svg></button>
  </div>
</footer>
</body>
</html>
```
FILE: styles.css
```css
* { box-sizing: border-box; }

body {
  margin: 0;
  height: 100vh;
  display: flex;
  flex-direction: column;
  overflow: hidden;
  font: 11px/14px "Liberation Sans", Arial, sans-serif;
  color: #222;
  background: #fff;
}

button {
  display: inline-flex;
  align-items: center;
  justify-content: center;
  margin: 0;
  padding: 0;
  border: 0;
  background: none;
  font: inherit;
  color: inherit;
}
a { color: inherit; text-decoration: none; }
ul { list-style: none; margin: 0; padding: 0; }
h1, h2 { margin: 0; }
svg { flex: none; display: block; }
input { font: inherit; color: #333; min-width: 0; }
input::placeholder { color: #8c8c8c; opacity: 1; }

.defs { position: absolute; width: 0; height: 0; }
.ic8 { width: 8px; height: 8px; }
.ic10 { width: 10px; height: 10px; }
.ic12 { width: 12px; height: 12px; }
.ic14 { width: 14px; height: 14px; }
.ic16 { width: 16px; height: 16px; }
.ic18 { width: 18px; height: 18px; }
.ic20 { width: 20px; height: 20px; }
.caret { width: 10px; height: 6px; }
.dots { height: 10px; border-left: 1px dotted #ccc; }

/* Browser frame */
.tabstrip, .addressbar, .bookmarks {
  flex: none;
  display: flex;
  align-items: center;
  font: 8px/12px Roboto, "Noto Sans", sans-serif;
  color: #4a4d51;
}
.tabstrip { height: 23px; background: #dee1e5; }
.tab { display: flex; align-items: center; height: 23px; gap: 6px; padding: 0 6px 0 12px; }
.tab-idle { width: 164px; }
.tab-active { width: 161px; padding-left: 9px; background: #fff; border-radius: 6px 6px 0 0; }
.tab-title { flex: 1; overflow: hidden; white-space: nowrap; }
.tab-close { font: 8px/12px "DejaVu Sans", sans-serif; color: #222; }
.newtab { width: 28px; height: 20px; }
.window-buttons { display: flex; margin-left: auto; }
.window-buttons button { width: 31px; height: 18px; }

.addressbar { height: 23px; background: #fff; }
.nav-buttons { display: flex; gap: 11px; padding: 0 12px 0 10px; }
.omnibox {
  flex: 1;
  display: flex;
  align-items: center;
  gap: 8px;
  height: 19px;
  padding: 0 7px 0 5px;
  border-radius: 10px;
  background: #f1f3f4;
}
.omnibox button + button { margin-left: 4px; }
.lock { width: 8px; height: 10px; }
.url { flex: 1; font: 9px/12px "Open Sans", sans-serif; white-space: nowrap; overflow: hidden; color: #6d7074; }
.url b { font-weight: 400; color: #26282b; }
.extensions { width: 214px; display: flex; justify-content: space-around; margin-left: 4px; }
.profile { display: flex; align-items: center; gap: 14px; padding: 0 12px 0 8px; border-left: 1px solid #ddd; }
.avatar { width: 14px; height: 14px; }
.kebab { width: 4px; height: 10px; }

.bookmarks { height: 22px; padding: 0 9px; background: #fff; }
.bookmarks a { display: flex; align-items: center; gap: 7px; white-space: nowrap; padding-right: 13px; }
.bookmarks .long { width: 103px; padding-right: 0; }
.bookmarks-end { display: flex; align-items: center; gap: 14px; margin-left: auto; }
.bookmarks-end a { padding-right: 0; }

/* Application header */
.appbar {
  flex: none;
  display: flex;
  align-items: center;
  height: 40px;
  padding: 0 18px 2px 13px;
  background: #323232;
  border-bottom: 1px solid #8d8d8d;
  color: #fff;
}
.burger { width: 22px; height: 18px; margin-left: 25px; }
.appbar h1 { font-size: 16px; line-height: 20px; margin-left: 24px; }
.user { font-size: 12px; font-weight: 700; margin-left: auto; }
.app-icons { display: flex; gap: 24px; margin: 0 24px 0 43px; }
.ibm { width: 42px; height: 16px; }

.toolbar {
  flex: none;
  display: flex;
  align-items: center;
  height: 48px;
  padding: 0 6px;
  background: #f6f6f6;
}
.find { width: 168px; height: 25px; padding: 0 2px; border: 1px solid #c9c9c9; border-radius: 4px; background: #fff; }
.find-button { width: 39px; height: 24px; margin-left: 4px; gap: 4px; border: 1px solid #bbb; border-radius: 3px; background: #fafafa; }
.tools { display: flex; gap: 10px; margin-left: 30px; }
.off { opacity: 0.35; }

/* Workspace */
.workspace { flex: 1; min-height: 0; display: flex; border-top: 1px solid #b5b5b5; }

.sidebar {
  flex: none;
  width: 232px;
  overflow: hidden;
  border: solid #8f8f8f;
  border-width: 1px 1px 0 1px;
  background: #f6f6f6;
  color: #6b6b6b;
}
.nav-search { position: relative; height: 32px; padding: 5px; background: #efefef; }
.nav-search input { width: 100%; height: 22px; padding: 0 24px 0 2px; border: 1px solid #8f8f8f; border-radius: 5px; background: #fff; }
.nav-search svg { position: absolute; right: 8px; top: 8px; }
.sidebar h2 {
  display: flex;
  align-items: center;
  gap: 3px;
  height: 32px;
  padding: 0 5px;
  border: solid #cfcfcf;
  border-width: 1px 0;
  background: #efefef;
  font-size: 11px;
  color: #262626;
}
.sidebar h2 + h2 { border-top: 0; height: 31px; }
.links a { display: flex; align-items: center; justify-content: space-between; height: 25px; padding: 0 5px 0 7px; }
.queries { height: 50px; }
.more { padding-top: 1px; }
.more a { border-bottom: 1px solid #ededed; }
.submenu { border-left: 5px solid #777; border-top: 4px solid transparent; border-bottom: 4px solid transparent; }
.actions-box { display: flex; height: 164px; overflow: hidden; }
.actions { flex: 1; }
.actions a { display: flex; align-items: center; gap: 12px; height: 26px; padding-left: 2px; border-bottom: 1px solid #ebebeb; }

.scroll-rail { flex: none; width: 12px; padding: 4px 2px; display: flex; flex-direction: column; align-items: center; background: #f3f3f3; }
.scroll-rail .thumb { width: 8px; height: 90px; margin-top: 2px; background: #c1c1c1; }
.arrow-up { border: 3px solid transparent; border-top: 0; border-bottom: 4px solid #aaa; }
.arrow-down { margin-top: auto; border: 3px solid transparent; border-bottom: 0; border-top: 4px solid #555; }
.page-rail .thumb { height: 373px; margin-top: 4px; }

.splitter { flex: none; width: 5px; display: flex; align-items: center; background: #f1f1f1; border-right: 1px solid #d5d5d5; }
.splitter button { width: 4px; height: 51px; border: solid #bbb; border-width: 1px 0; background: #e3e3e3; }
.splitter button::before { content: ""; border: 4px solid transparent; border-left: 0; border-right-color: #000; }

.content { flex: 1; min-width: 0; overflow: hidden; padding: 12px 68px 0 10px; }
.query-bar { display: flex; gap: 18px; height: 24px; padding-left: 7px; }
.query-bar button { gap: 3px; }
.query-bar .dots { margin-left: 6px; }
.ribbon { width: 8px; height: 16px; margin: 0 4px 0 5px; }

.table-bar { display: flex; align-items: center; height: 32px; padding-left: 2px; }
.table-bar h2 { font-size: 16px; line-height: 20px; font-weight: 400; margin-right: 20px; }
.filter { gap: 3px; margin-right: 10px; color: #3d5678; }
.funnel { width: 14px; height: 9px; }
.table-tools { display: flex; align-items: center; gap: 19px; margin-left: 7px; }
.row-steps { display: flex; gap: 9px; }
.faint { opacity: 0.2; }
.range { font: 12px/16px "DejaVu Sans Mono", monospace; white-space: pre; margin: 0 6px 0 17px; }
.table-bar-end { display: flex; gap: 30px; margin-left: auto; padding-right: 3px; }

table { width: 100%; table-layout: fixed; border-collapse: collapse; border-top: 2px solid #a9c0c8; }
.c-wo { width: 87px; }
.c-mid { width: 104px; }
.c-date { width: 124px; }
.c-pri { width: 42px; }
.c-mark { width: 35px; }
th, td { padding: 0 3px; text-align: left; font-weight: 400; white-space: nowrap; vertical-align: middle; }
th { padding: 0 5px 3px; color: #555; }
th:first-child { padding-left: 17px; }
th.num { padding-right: 7px; }
th a, tbody a { text-decoration: underline; }
.names { height: 22px; background: linear-gradient(#f1f1f1, #e2e2e2 60%, #ededed); }
.filters { height: 30px; background: #f1f1f1; }
.filters td { padding: 0 1px 1px; }
.filters td:first-child { padding-left: 13px; }
.field { display: flex; align-items: center; justify-content: space-between; padding-right: 9px; }
.field.end { justify-content: flex-end; padding-right: 6px; }
.field input { flex: none; width: 70px; height: 22px; padding: 0 2px; border: 1px solid #d2d2d2; border-radius: 4px; background: #fff; }
.field .wide { flex: 1; margin-right: 13px; }
.field .date { width: 86px; }
.field .tiny { width: 30px; }

tbody tr { height: 28px; }
tbody tr:nth-child(even) { background: #f6f6f6; }
tbody .hover { background: #dff1f8; }
tbody td + td { border-left: 1px solid rgba(0, 0, 0, 0.03); }
tbody td:first-child { position: relative; padding-left: 16px; }
tbody td:last-child { padding: 0 9px 0 5px; }
.num { text-align: right; }
.asset svg { display: inline-block; width: 10px; height: 10px; margin-left: 2px; vertical-align: 2px; }
tbody button { width: 100%; }
.mark { width: 20px; height: 18px; }
.pointer { position: absolute; left: 17px; top: 7px; width: 14px; height: 16px; }

/* Taskbar */
.taskbar {
  flex: none;
  display: flex;
  height: 27px;
  background: linear-gradient(90deg, #262524, #3f3b36 85%, #2e2f33);
  color: #fff;
  font: 10px/12px Roboto, "Noto Sans", sans-serif;
}
.start { width: 32px; background: #1d1c1c; }
.task-search { width: 229px; display: flex; align-items: center; gap: 6px; padding-left: 8px; background: #f1f1f1; }
.task-search input { flex: 1; border: 0; background: none; padding: 0; }
.task-search input::placeholder { color: #444; }
.task-icons { width: 425px; display: flex; }
.task-icons button { flex: 1; margin: 0 3px; border: solid transparent; border-width: 2px 0; }
.task-icons .open { border-bottom-color: #76a9d8; }
.task-icons .current { margin: 0; padding: 0 3px; background: #6b6864; border-top-color: #6b6864; }
.tray { display: flex; align-items: center; gap: 5px; margin-left: auto; padding-right: 18px; font-size: 8px; }
.clock { display: flex; flex-direction: column; align-items: center; margin-right: 6px; }
```
